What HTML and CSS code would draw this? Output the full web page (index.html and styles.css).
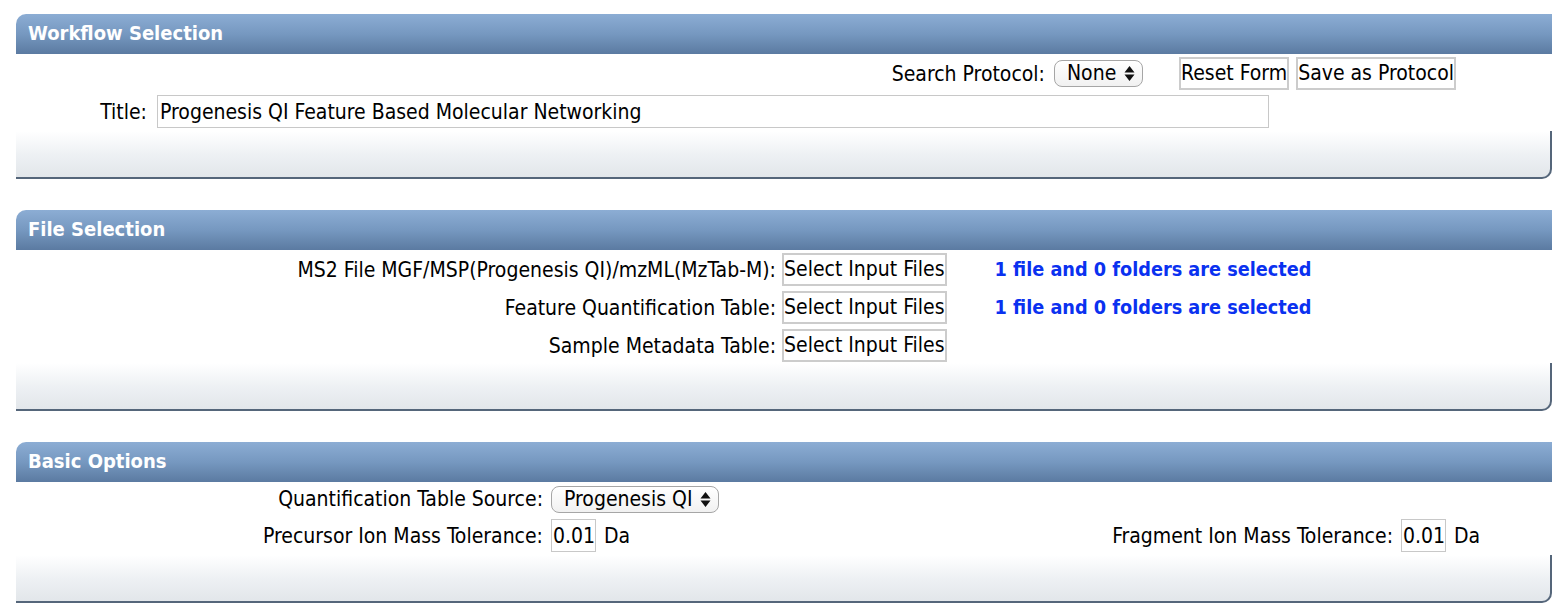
FILE: index.html
```html
<!DOCTYPE html>
<html lang="en">
<head>
<meta charset="utf-8">
<title>Workflow</title>
<link rel="stylesheet" href="styles.css">
</head>
<body>
<div class="page">
  <section class="panel">
    <div class="panel-head">Workflow Selection</div>
    <div class="panel-body wf-body">
      <div class="wf-protocol">
        <label class="lbl">Search Protocol:</label>
        <span class="sel-wrap">
          <select class="sel"><option>None</option></select>
          <svg class="sel-arrows" width="11" height="17" viewBox="0 0 11 17"><path d="M5.5 1 L10.5 7.5 H0.5 Z M5.5 16 L10.5 9.5 H0.5 Z" fill="#111"/></svg>
        </span>
        <span class="wf-buttons">
          <button class="btn">Reset Form</button>
          <button class="btn">Save as Protocol</button>
        </span>
      </div>
      <div class="wf-title">
        <label class="lbl title-lbl">Title:</label>
        <input class="txt title-input" type="text" value="Progenesis QI Feature Based Molecular Networking">
      </div>
    </div>
    <div class="panel-foot"></div>
  </section>

  <section class="panel">
    <div class="panel-head">File Selection</div>
    <div class="panel-body files-body">
      <div class="file-row">
        <label class="lbl file-lbl">MS2 File MGF/MSP(Progenesis QI)/mzML(MzTab-M):</label>
        <span class="file-field"><button class="btn">Select Input Files</button><span class="file-status">1 file and 0 folders are selected</span></span>
      </div>
      <div class="file-row">
        <label class="lbl file-lbl">Feature Quantification Table:</label>
        <span class="file-field"><button class="btn">Select Input Files</button><span class="file-status">1 file and 0 folders are selected</span></span>
      </div>
      <div class="file-row">
        <label class="lbl file-lbl">Sample Metadata Table:</label>
        <span class="file-field"><button class="btn">Select Input Files</button></span>
      </div>
    </div>
    <div class="panel-foot"></div>
  </section>

  <section class="panel">
    <div class="panel-head">Basic Options</div>
    <div class="panel-body opts-body">
      <label class="lbl opt-lbl">Quantification Table Source:</label>
      <span class="opt-field">
        <span class="sel-wrap">
          <select class="sel"><option>Progenesis QI</option></select>
          <svg class="sel-arrows" width="11" height="17" viewBox="0 0 11 17"><path d="M5.5 1 L10.5 7.5 H0.5 Z M5.5 16 L10.5 9.5 H0.5 Z" fill="#111"/></svg>
        </span>
      </span>
      <span class="opt-spacer"></span>
      <span class="opt-spacer"></span>

      <label class="lbl opt-lbl">Precursor Ion Mass Tolerance:</label>
      <span class="opt-field"><input class="txt num" type="text" value="0.01"><span class="unit">Da</span></span>
      <label class="lbl opt-lbl2">Fragment Ion Mass Tolerance:</label>
      <span class="opt-field"><input class="txt num" type="text" value="0.01"><span class="unit">Da</span></span>
    </div>
    <div class="panel-foot"></div>
  </section>
</div>
</body>
</html>
```
FILE: styles.css
```css
html, body {
  margin: 0;
  padding: 0;
  background: #ffffff;
}
body {
  font-family: "DejaVu Sans Condensed", "DejaVu Sans", sans-serif;
  font-stretch: condensed;
  font-size: 21px;
  color: #000;
}
.page {
  padding: 14px 8px 0 16px;
  display: flex;
  flex-direction: column;
  gap: 31px;
}
.panel {
  display: flex;
  flex-direction: column;
}
.panel-head {
  height: 40px;
  box-sizing: border-box;
  padding-left: 12px;
  padding-bottom: 2px;
  display: flex;
  align-items: center;
  color: #fff;
  font-weight: bold;
  font-size: 20px;
  background: linear-gradient(to bottom, #8cadd4 0%, #7698c0 50%, #5b7aa1 100%);
  border-top-left-radius: 10px;
}
.panel-body {
  background: #fff;
}
.panel-foot {
  height: 48px;
  box-sizing: border-box;
  background: linear-gradient(to bottom, #ffffff 0%, #eef1f4 50%, #e2e6ea 100%);
  border-right: 2px solid #55667a;
  border-bottom: 2px solid #55667a;
  border-bottom-right-radius: 10px;
}
.lbl {
  white-space: nowrap;
}
.btn {
  font: inherit;
  color: #000;
  background: #fff;
  border: 2px solid #cccccc;
  border-radius: 0;
  height: 33px;
  padding: 0;
  line-height: 1;
  margin: 0;
}
.txt {
  font: inherit;
  color: #000;
  background: #fff;
  border: 1px solid #c8c8c8;
  height: 33px;
  box-sizing: border-box;
  padding: 0 2px;
  margin: 0;
  outline: none;
}
.sel-wrap {
  position: relative;
  display: inline-flex;
}
.sel {
  font: inherit;
  color: #000;
  appearance: none;
  -webkit-appearance: none;
  border: 1px solid #a6a6a6;
  border-radius: 8px;
  background: linear-gradient(to bottom, #ffffff, #f1f1f1);
  height: 27px;
  padding: 0 25px 0 12px;
  margin: 0;
  line-height: 25px;
}
.sel-arrows {
  position: absolute;
  right: 8px;
  top: 5px;
  pointer-events: none;
}

/* workflow panel */
.wf-body {
  padding: 3px 0 3px 0;
  display: flex;
  flex-direction: column;
  gap: 5px;
}
.wf-protocol {
  display: flex;
  justify-content: flex-end;
  align-items: center;
  padding-right: 96px;
  height: 33px;
}
.wf-protocol .lbl {
  margin-right: 9px;
}
.wf-buttons {
  display: flex;
  gap: 7px;
  margin-left: 36px;
}
.wf-title {
  display: flex;
  align-items: center;
  height: 33px;
}
.title-lbl {
  width: 131px;
  text-align: right;
  margin-right: 10px;
}
.title-input {
  width: 1112px;
}

/* files panel */
.files-body {
  padding-top: 2px;
  display: flex;
  flex-direction: column;
  gap: 3px;
}
.file-row {
  display: grid;
  grid-template-columns: 766px 1fr;
  align-items: center;
  height: 35px;
}
.file-lbl {
  text-align: right;
  padding-right: 6px;
}
.file-field {
  display: flex;
  align-items: center;
}
.file-status {
  color: #0a31f0;
  font-weight: bold;
  font-size: 19.7px;
  margin-left: 48px;
}

/* options panel */
.opts-body {
  padding: 4px 0 3px 0;
  display: grid;
  grid-template-columns: 535px auto 1fr 151px;
  grid-template-rows: 26px 33px;
  row-gap: 7px;
  align-items: center;
}
.opt-lbl, .opt-lbl2 {
  text-align: right;
  padding-right: 8px;
}
.opt-field {
  display: flex;
  align-items: center;
}
.num {
  width: 45px;
  padding: 0 1px;
}
.unit {
  margin-left: 8px;
}
```
